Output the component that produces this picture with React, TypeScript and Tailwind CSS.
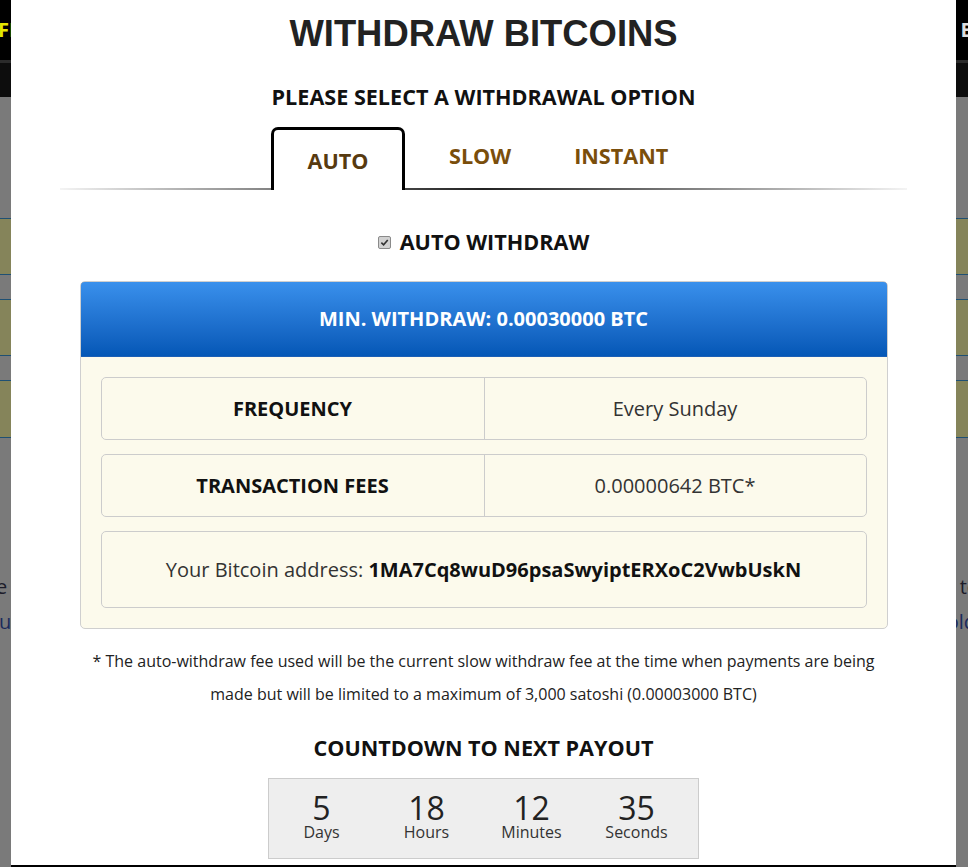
import React from "react"

const rows = [
  { label: "FREQUENCY", value: "Every Sunday" },
  { label: "TRANSACTION FEES", value: "0.00000642 BTC*" },
]

const countdown = [
  { n: "5", label: "Days" },
  { n: "18", label: "Hours" },
  { n: "12", label: "Minutes" },
  { n: "35", label: "Seconds" },
]

function CheckMark() {
  return (
    <span className="flex h-[13px] w-[13px] items-center justify-center rounded-[2px] border border-[#8a8a8a] bg-[#d2d2d2]">
      <svg viewBox="0 0 10 10" className="h-[9px] w-[9px]">
        <path d="M1.5 5.2 L4 7.6 L8.6 2.2" fill="none" stroke="#333" strokeWidth="1.8" />
      </svg>
    </span>
  )
}

export default function App() {
  return (
    <div className="relative h-[867px] w-[968px] overflow-hidden bg-[#7a7a7a] font-['Open_Sans',sans-serif]">
      {/* Page behind the overlay */}
      <div className="flex h-[60px] items-center justify-between bg-black">
        <span className="-ml-[2px] text-[20px] font-bold text-[#e6e600]">FREE</span>
        <span className="mr-[-47px] text-[20px] font-bold text-[#dddddd]">EARN</span>
      </div>
      <div className="h-[3px] bg-[#2b2b2b]" />
      <div className="h-[34px] bg-[#0d0d0d]" />
      <div className="mt-[121px] flex flex-col gap-[24px]">
        <div className="h-[57px] border-y border-[#1f5073] bg-[#85845a]" />
        <div className="h-[57px] border-y border-[#1f5073] bg-[#85845a]" />
        <div className="h-[58px] border-y border-[#1f5073] bg-[#85845a]" />
      </div>
      <div className="mt-[131px] flex justify-between text-[20px] leading-[35px] text-[#1c1c2a]">
        <span className="-ml-[4px]">e</span>
        <span className="mr-[-10px]">te</span>
      </div>
      <div className="flex justify-between text-[20px] leading-[35px] text-[#1a2a5c]">
        <span className="-ml-[1px]">u</span>
        <span className="mr-[-8px]">old</span>
      </div>

      {/* Modal */}
      <div className="absolute left-[11px] top-0 flex h-[867px] w-[945px] flex-col items-center border-b-2 border-black bg-white">
        <h1 className="pt-[13px] font-['Liberation_Sans',Arial,sans-serif] text-[36.4px] font-bold leading-[41px] text-[#222]">
          WITHDRAW BITCOINS
        </h1>
        <h2 className="mt-[29px] text-[21.6px] font-bold leading-[28px] text-[#111]">
          PLEASE SELECT A WITHDRAWAL OPTION
        </h2>

        {/* Tabs */}
        <div className="mt-[16px] flex w-full flex-col">
          <div className="relative z-10 flex h-[61px] items-end pl-[260px] text-[21.6px] font-bold">
            <div className="-mb-[2px] flex h-[63px] w-[134px] items-center justify-center rounded-t-[7px] border-[3px] border-b-0 border-black bg-white pt-[3px] text-[#573a10]">
              AUTO
            </div>
            <div className="ml-[44px] flex h-[61px] items-center pb-[2px] text-[#7a4e0b]">SLOW</div>
            <div className="ml-[63px] flex h-[61px] items-center pb-[2px] text-[#7a4e0b]">INSTANT</div>
          </div>
          <div className="mx-[49px] h-[2px] bg-linear-to-r from-[#f4f4f4] via-[#222] to-[#f4f4f4]" />
        </div>

        <div className="mt-[38px] flex items-center gap-[9px] text-[21.6px] font-bold leading-[28px] text-[#111]">
          <CheckMark />
          <span>AUTO WITHDRAW</span>
        </div>

        {/* Min withdraw panel */}
        <div className="mt-[25px] w-[808px] overflow-hidden rounded-[5px] border border-[#cfcfcf] bg-[#fcfaec]">
          <div className="-mx-px -mt-px flex h-[76px] items-center justify-center rounded-t-[5px] border border-[#1b5fb5] bg-linear-to-b from-[#3990ec] to-[#0457b6] text-[20px] font-bold text-white">
            MIN. WITHDRAW: 0.00030000 BTC
          </div>
          <div className="flex flex-col gap-[14px] px-[20px] pb-[20px] pt-[20px]">
            {rows.map((r) => (
              <div key={r.label} className="flex h-[63px] rounded-[5px] border border-[#cccccc] text-[20px]">
                <div className="flex w-[383px] items-center justify-center border-r border-[#cccccc] font-bold text-[#111]">
                  {r.label}
                </div>
                <div className="flex flex-1 items-center justify-center text-[#333]">{r.value}</div>
              </div>
            ))}
            <div className="flex h-[77px] items-center justify-center rounded-[5px] border border-[#cccccc] text-[20px] text-[#333]">
              Your Bitcoin address:&nbsp;<span className="font-bold text-[#111]">1MA7Cq8wuD96psaSwyiptERXoC2VwbUskN</span>
            </div>
          </div>
        </div>

        <p className="mt-[16px] w-[808px] text-center text-[16px] leading-[33px] text-[#222]">
          * The auto-withdraw fee used will be the current slow withdraw fee at the time when payments are being made but
          will be limited to a maximum of 3,000 satoshi (0.00003000 BTC)
        </p>

        <h3 className="mt-[23px] text-[21.6px] font-bold leading-[28px] text-[#111]">COUNTDOWN TO NEXT PAYOUT</h3>

        <div className="mt-[16px] flex h-[81px] w-[431px] border border-[#cccccc] bg-[#eeeeee] pt-[13px] text-[#222]">
          {countdown.map((c) => (
            <div key={c.label} className="flex w-[105px] flex-col items-center">
              <span className="text-[32px] leading-[32px]">{c.n}</span>
              <span className="text-[16px] leading-[16px] text-[#333]">{c.label}</span>
            </div>
          ))}
        </div>
      </div>
    </div>
  )
}
